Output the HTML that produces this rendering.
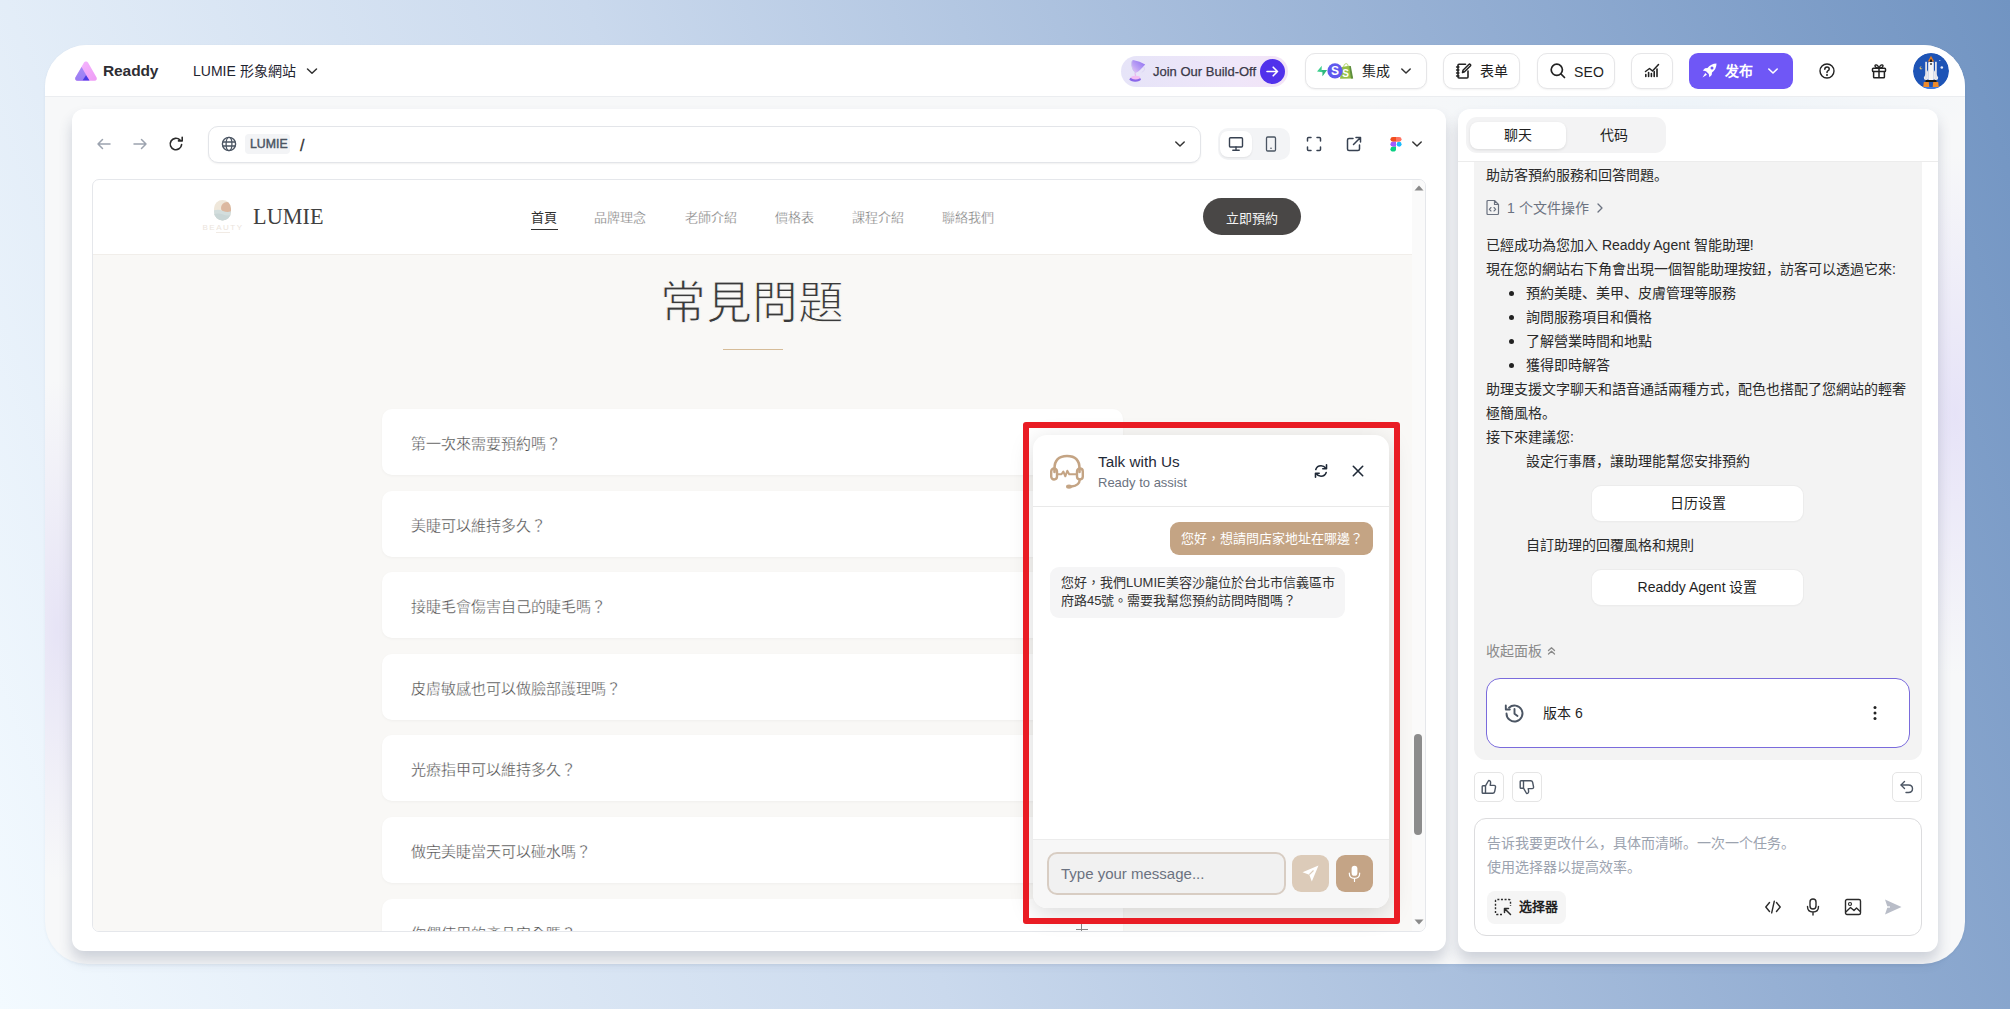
<!DOCTYPE html>
<html lang="zh-TW">
<head>
<meta charset="utf-8">
<style>
*{box-sizing:border-box;margin:0;padding:0}
html,body{width:2010px;height:1009px;overflow:hidden}
body{position:relative;font-family:"Liberation Sans",sans-serif;color:#1f2937;
background:linear-gradient(70deg,#f3faff 0%,#cad9ed 40%,#96b0d4 75%,#7194c2 100%)}
.a{position:absolute}
.win{left:45px;top:45px;width:1920px;height:919px;border-radius:42px;background:radial-gradient(ellipse 60px 250px at 12px 585px,rgba(200,190,240,.35),rgba(200,190,240,0)),radial-gradient(ellipse 90px 260px at 1910px 370px,rgba(205,195,245,.4),rgba(205,195,245,0)),radial-gradient(ellipse 320px 36px at 1640px 58px,rgba(205,228,248,.22),rgba(205,228,248,0)),#f7f8f9;overflow:hidden;box-shadow:0 1px 3px rgba(40,60,100,.06)}
.hdr{left:0;top:0;width:1920px;height:52px;background:#fff;border-bottom:1px solid #ebedf0}
.hbtn{background:#fff;border:1px solid #e6e6e8;border-radius:10px;box-shadow:0 1px 2px rgba(0,0,0,.05)}
.nav{top:208px;font:13px/20px 'Liberation Sans',sans-serif;color:#6a6a6a;-webkit-text-stroke:.3px #fff}
.faq{left:382px;width:741px;height:66px;background:#fff;border-radius:10px;box-shadow:0 1px 3px rgba(0,0,0,.04)}
.faq span{position:absolute;left:29px;top:25px;font:15px/20px 'Liberation Sans',sans-serif;color:#484848;-webkit-text-stroke:.3px #fff}
.faq.last:after{content:"";position:absolute;left:694px;top:25px;width:12px;height:12px;background:linear-gradient(#888,#888) center/12px 1.2px no-repeat,linear-gradient(#888,#888) center/1.2px 12px no-repeat}
.rp{left:1486px;font:14px/24px 'Liberation Sans',sans-serif;color:#2a2a2a;white-space:nowrap}
.dot{left:1509px;width:5px;height:5px;border-radius:50%;background:#222}
.rbtn{left:1592px;width:211px;height:35px;border-radius:9px;background:#fff;box-shadow:0 0 0 1px #ececec,0 1px 2px rgba(0,0,0,.05);font:14px/35px 'Liberation Sans',sans-serif;color:#1f1f1f;text-align:center}
.sbtn{width:30px;height:30px;border:1px solid #e5e5e5;border-radius:5px;background:#fff}
.card{background:#fff;border-radius:12px;box-shadow:0 9px 14px rgba(40,55,90,.2)}
</style>
</head>
<body>
<div class="a win">
  <div class="a hdr"></div>
</div>
<div class="a card" style="left:72px;top:109px;width:1374px;height:842px"></div>
<div class="a card" style="left:1458px;top:109px;width:480px;height:843px"></div>

<!-- HEADER -->
<svg class="a" style="left:74px;top:60px" width="24" height="22" viewBox="0 0 24 22">
  <defs>
    <linearGradient id="lgP" x1="0" y1="0" x2="1" y2="1"><stop offset="0" stop-color="#f5b8ff"/><stop offset="1" stop-color="#ee9cf5"/></linearGradient>
    <linearGradient id="lgL" x1="0" y1="0" x2="0" y2="1"><stop offset="0" stop-color="#a58bf7"/><stop offset="1" stop-color="#9a7cf3"/></linearGradient>
  </defs>
  <path d="M12 1.5 Q13 1.2 14 2.6 L22.6 17.5 Q23.6 20.5 20.5 20.8 L3.5 20.8 Q0.4 20.5 1.4 17.5 L10 2.6 Q11 1.2 12 1.5Z" fill="url(#lgP)"/>
  <path d="M7.6 7 L1.4 17.5 Q0.4 20.5 3.5 20.8 L15.5 20.8 Z" fill="url(#lgL)"/>
  <path d="M12 15.2 L15.3 20.2 L8.7 20.2 Z" fill="#4a3ae6"/>
</svg>
<div class="a" style="left:103px;top:60px;font:bold 15.5px/22px 'Liberation Sans',sans-serif;color:#2d2d33;letter-spacing:-0.1px">Readdy</div>
<div class="a" style="left:193px;top:60px;font:14px/22px 'Liberation Sans',sans-serif;color:#1f2430">LUMIE 形象網站</div>
<svg class="a" style="left:306px;top:66px" width="12" height="10" viewBox="0 0 12 10"><path d="M1.5 3 L6 7.2 L10.5 3" fill="none" stroke="#333" stroke-width="1.5" stroke-linecap="round" stroke-linejoin="round"/></svg>

<!-- Join pill -->
<div class="a" style="left:1121px;top:56px;width:167px;height:31px;border-radius:16px;background:linear-gradient(90deg,#e6e4f8,#efe6f9 70%,#f3e4f6)"></div>
<svg class="a" style="left:1127px;top:58px" width="20" height="27" viewBox="0 0 20 27">
  <defs><linearGradient id="tg" x1="1" y1="0" x2="0" y2="1"><stop offset="0" stop-color="#7f5df0"/><stop offset=".6" stop-color="#b79af4"/><stop offset="1" stop-color="#f0c8f4"/></linearGradient></defs>
  <path d="M6 2 Q4.2 3 4.6 7.5 Q5.5 12.5 8.5 15 Q11 14 13 12 Q16 9 18.2 6.5 Q13 3 6 2Z" fill="url(#tg)" opacity=".9"/>
  <path d="M6 2 Q4.2 3 4.6 7.5 Q5.5 12.5 8.5 15" fill="none" stroke="#c8c0ee" stroke-width=".8"/>
  <path d="M17 9 Q19 12 15 14.5" fill="none" stroke="#d6cff0" stroke-width=".8"/>
  <path d="M8 15 L8.6 18" stroke="#e6b8f0" stroke-width="1.2"/>
  <ellipse cx="8.2" cy="21.3" rx="5.6" ry="2.4" fill="#8a66ea"/>
  <ellipse cx="8.6" cy="19.6" rx="4.6" ry="1.8" fill="#f2bdf2"/>
</svg>
<div class="a" style="left:1153px;top:62.5px;font:13px/18px 'Liberation Sans',sans-serif;color:#3a3848;-webkit-text-stroke:.25px #3a3848">Join Our Build-Off</div>
<div class="a" style="left:1260px;top:59px;width:25px;height:25px;border-radius:50%;background:#5131eb"></div>
<svg class="a" style="left:1264px;top:63px" width="17" height="17" viewBox="0 0 17 17"><path d="M3 8.5 H13.5 M9.2 4.2 L13.5 8.5 L9.2 12.8" fill="none" stroke="#fff" stroke-width="1.6" stroke-linecap="round" stroke-linejoin="round"/></svg>

<!-- 集成 -->
<div class="a hbtn" style="left:1305px;top:53px;width:122px;height:36px"></div>
<svg class="a" style="left:1315px;top:61px" width="40" height="20" viewBox="0 0 40 20">
  <path d="M2 10.5 L6.8 4.8 L6.6 9 L12 9 L7.5 15.3 L7.6 11.2 Z" fill="#3ecf8e"/>
  <path d="M6.6 9 L12 9 L7.5 15.3 L7.6 11.2Z" fill="#2aa872" opacity=".6"/>
  <path d="M26.5 6 L34.5 4.8 L37.8 17.5 L25 17.8 Z" fill="#95bf47"/>
  <path d="M34.2 4.9 L35.8 5 L38.2 17.4 L36 17.6 Z" fill="#5e8e3e"/>
  <path d="M28.5 6 Q29 2.6 31.2 2.6 Q33 2.7 33.2 5.2" fill="none" stroke="#b6d66e" stroke-width="1"/>
  <text x="30.5" y="15.5" text-anchor="middle" font-family="Liberation Sans" font-weight="bold" font-size="10" fill="#fff">S</text>
  <circle cx="20" cy="9.9" r="7.6" fill="#5e58ee"/>
  <text x="20" y="14.2" text-anchor="middle" font-family="Liberation Sans" font-weight="bold" font-size="12" fill="#fff">S</text>
</svg>
<div class="a" style="left:1362px;top:60px;font:14px/22px 'Liberation Sans',sans-serif;color:#1f1f1f">集成</div>
<svg class="a" style="left:1400px;top:66px" width="12" height="10" viewBox="0 0 12 10"><path d="M1.8 3 L6 7 L10.2 3" fill="none" stroke="#333" stroke-width="1.5" stroke-linecap="round" stroke-linejoin="round"/></svg>

<!-- 表单 -->
<div class="a hbtn" style="left:1443px;top:53px;width:77px;height:36px"></div>
<svg class="a" style="left:1455px;top:62px" width="17" height="18" viewBox="0 0 17 18">
  <path d="M10.5 2.2 H4 Q3 2.2 3 3.2 V15 Q3 16 4 16 H12 Q13 16 13 15 V9" fill="none" stroke="#222" stroke-width="1.6" stroke-linecap="round"/>
  <path d="M7.5 10.5 L8 8.3 L13.8 2.5 Q14.6 1.8 15.3 2.5 Q16 3.2 15.3 4 L9.5 9.8 Z" fill="none" stroke="#222" stroke-width="1.5" stroke-linejoin="round"/>
  <path d="M1.5 5 H4 M1.5 8 H4 M1.5 11 H4 M1.5 14 H4" stroke="#222" stroke-width="1.3" stroke-linecap="round"/>
</svg>
<div class="a" style="left:1480px;top:60px;font:14px/22px 'Liberation Sans',sans-serif;color:#1f1f1f">表单</div>

<!-- SEO -->
<div class="a hbtn" style="left:1537px;top:53px;width:78px;height:36px"></div>
<svg class="a" style="left:1549px;top:62px" width="18" height="18" viewBox="0 0 18 18"><circle cx="7.8" cy="7.8" r="5.6" fill="none" stroke="#222" stroke-width="1.7"/><path d="M12 12 L15.5 15.5" stroke="#222" stroke-width="1.7" stroke-linecap="round"/></svg>
<div class="a" style="left:1574px;top:60.5px;font:14px/22px 'Liberation Sans',sans-serif;color:#1f1f1f;letter-spacing:.1px">SEO</div>

<!-- chart -->
<div class="a hbtn" style="left:1631px;top:53px;width:42px;height:36px"></div>
<svg class="a" style="left:1643px;top:61px" width="18" height="18" viewBox="0 0 18 18">
  <path d="M2.5 10.5 L6.5 7.5 L9.5 10 L15.5 3.5" fill="none" stroke="#222" stroke-width="1.5" stroke-linecap="round" stroke-linejoin="round"/>
  <path d="M2.8 15.5 V13.5 M5.6 15.5 V11.5 M8.4 15.5 V12.5 M11.2 15.5 V10.5 M14 15.5 V8" stroke="#222" stroke-width="1.6" stroke-linecap="round"/>
</svg>

<!-- 发布 -->
<div class="a" style="left:1689px;top:53px;width:104px;height:36px;border-radius:9px;background:#6f57f6"></div>
<svg class="a" style="left:1701px;top:62px" width="17" height="17" viewBox="0 0 17 17">
  <path d="M15.5 1.5 Q10 1.5 6.5 6 L4 6.3 L1.8 8.6 L5 9.2 L7.8 12 L8.4 15.2 L10.7 13 L11 10.5 Q15.5 7 15.5 1.5Z" fill="#fff"/>
  <circle cx="11" cy="6" r="1.5" fill="#6f57f6"/>
  <path d="M4.3 11 L1.5 15.5 L6 12.7 Z" fill="#fff"/>
</svg>
<div class="a" style="left:1725px;top:60px;font:bold 14px/22px 'Liberation Sans',sans-serif;color:#fff">发布</div>
<svg class="a" style="left:1767px;top:66px" width="12" height="10" viewBox="0 0 12 10"><path d="M1.8 3 L6 7 L10.2 3" fill="none" stroke="#fff" stroke-width="1.6" stroke-linecap="round" stroke-linejoin="round"/></svg>

<!-- help, gift, avatar -->
<svg class="a" style="left:1818px;top:62px" width="18" height="18" viewBox="0 0 18 18"><circle cx="9" cy="9" r="7" fill="none" stroke="#222" stroke-width="1.4"/><path d="M6.8 7.2 Q6.8 4.9 9 4.9 Q11.2 4.9 11.2 6.9 Q11.2 8.2 9.8 8.9 Q9 9.3 9 10.6" fill="none" stroke="#222" stroke-width="1.5" stroke-linecap="round"/><circle cx="9" cy="12.9" r="1" fill="#222"/></svg>
<svg class="a" style="left:1870px;top:62px" width="18" height="18" viewBox="0 0 18 18">
  <rect x="2.5" y="6.2" width="13" height="3.3" rx=".8" fill="none" stroke="#222" stroke-width="1.5"/>
  <path d="M3.6 9.5 V15 Q3.6 15.8 4.4 15.8 H13.6 Q14.4 15.8 14.4 15 V9.5 M9 6.2 V15.8" fill="none" stroke="#222" stroke-width="1.5"/>
  <path d="M9 6.2 Q7.8 2.5 5.8 2.9 Q4.3 3.4 5.5 5 Q6.5 6.2 9 6.2 Q11.5 6.2 12.5 5 Q13.7 3.4 12.2 2.9 Q10.2 2.5 9 6.2" fill="none" stroke="#222" stroke-width="1.4"/>
</svg>
<svg class="a" style="left:1913px;top:53px" width="36" height="36" viewBox="0 0 36 36">
  <defs><clipPath id="avc"><circle cx="18" cy="18" r="18"/></clipPath></defs>
  <g clip-path="url(#avc)">
  <circle cx="18" cy="18" r="18" fill="#1e54b6"/>
  <rect x="0" y="34" width="36" height="3" fill="#3f7be0"/>
  <path d="M18 2.8 L21.2 8.5 H14.8 Z" fill="#e07b24"/>
  <rect x="17" y="6.5" width="2" height="2.5" fill="#222"/>
  <rect x="15.2" y="9" width="5.6" height="18" rx="1" fill="#f4f4f6"/>
  <rect x="17.3" y="10" width="1.4" height="2" fill="#333"/>
  <path d="M15.3 16.5 L10.8 24.5 L11.2 26.5 H15.3Z M20.7 16.5 L25.2 24.5 L24.8 26.5 H20.7Z" fill="#e9e9ee"/>
  <rect x="12.2" y="8.8" width="1.8" height="18.5" fill="#e2e2e8"/><rect x="22" y="8.8" width="1.8" height="18.5" fill="#e2e2e8"/>
  <rect x="12.5" y="27" width="11" height="2" fill="#1a1a1a"/>
  <path d="M10.8 29 H15.8 L16.3 34 H10.2Z M20.2 29 H25.2 L25.8 34 H19.7Z" fill="#ee8a2a"/>
  <circle cx="8" cy="15" r="1.4" fill="#e9c86a"/><circle cx="8.7" cy="14.5" r="1.1" fill="#1e54b6"/>
  <circle cx="28.8" cy="14.5" r="1.3" fill="#e8eefc"/><circle cx="26.8" cy="7.5" r=".6" fill="#dfe8fa"/>
  </g>
</svg>


<!-- BROWSER TOOLBAR -->
<svg class="a" style="left:95px;top:135px" width="18" height="18" viewBox="0 0 18 18"><path d="M15 9 H3 M7.5 4.5 L3 9 L7.5 13.5" fill="none" stroke="#9ca3af" stroke-width="1.5" stroke-linecap="round" stroke-linejoin="round"/></svg>
<svg class="a" style="left:131px;top:135px" width="18" height="18" viewBox="0 0 18 18"><path d="M3 9 H15 M10.5 4.5 L15 9 L10.5 13.5" fill="none" stroke="#9ca3af" stroke-width="1.5" stroke-linecap="round" stroke-linejoin="round"/></svg>
<svg class="a" style="left:167px;top:135px" width="18" height="18" viewBox="0 0 18 18"><path d="M14.6 9.6 A5.7 5.7 0 1 1 12.9 4.9" fill="none" stroke="#2b2b2b" stroke-width="1.6" stroke-linecap="round"/><path d="M15.2 2.2 V5.9 H11.5" fill="none" stroke="#2b2b2b" stroke-width="1.6" stroke-linecap="round" stroke-linejoin="round"/></svg>
<div class="a" style="left:208px;top:126px;width:993px;height:37px;border:1px solid #e3e5e9;border-radius:10px;background:#fff;box-shadow:0 1px 2px rgba(0,0,0,.06)"></div>
<svg class="a" style="left:220px;top:135px" width="18" height="18" viewBox="0 0 18 18"><circle cx="9" cy="9" r="6.6" fill="none" stroke="#4b5563" stroke-width="1.4"/><ellipse cx="9" cy="9" rx="2.9" ry="6.6" fill="none" stroke="#4b5563" stroke-width="1.3"/><path d="M2.6 7 H15.4 M2.6 11 H15.4" stroke="#4b5563" stroke-width="1.3"/></svg>
<div class="a" style="left:245px;top:134px;width:45px;height:20px;border-radius:4px;background:#f3f4f6"></div>
<div class="a" style="left:250px;top:135px;font:12.3px/18px 'Liberation Sans',sans-serif;color:#4b5563;-webkit-text-stroke:.45px #4b5563">LUMIE</div>
<div class="a" style="left:300px;top:136px;font:16px/20px 'Liberation Sans',sans-serif;color:#333;-webkit-text-stroke:.3px #333">/</div>
<svg class="a" style="left:1174px;top:139px" width="12" height="10" viewBox="0 0 12 10"><path d="M1.8 3 L6 7 L10.2 3" fill="none" stroke="#333" stroke-width="1.5" stroke-linecap="round" stroke-linejoin="round"/></svg>
<div class="a" style="left:1218px;top:128px;width:72px;height:32px;border-radius:10px;background:#f3f4f6"></div>
<div class="a" style="left:1220px;top:131px;width:32px;height:26px;border-radius:8px;background:#fff;box-shadow:0 1px 2px rgba(0,0,0,.08)"></div>
<svg class="a" style="left:1228px;top:136px" width="16" height="16" viewBox="0 0 16 16"><rect x="1.5" y="1.8" width="13" height="9.2" rx="1" fill="none" stroke="#374151" stroke-width="1.4"/><path d="M8 11 V14 M4.8 14.3 H11.2" stroke="#374151" stroke-width="1.4" stroke-linecap="round"/></svg>
<svg class="a" style="left:1263px;top:136px" width="16" height="16" viewBox="0 0 16 16"><rect x="3.5" y="1" width="9" height="14" rx="1.2" fill="none" stroke="#4b5563" stroke-width="1.3"/><circle cx="8" cy="12.3" r=".8" fill="#4b5563"/></svg>
<svg class="a" style="left:1306px;top:136px" width="16" height="16" viewBox="0 0 16 16"><path d="M1.5 5 V2.5 Q1.5 1.5 2.5 1.5 H5 M11 1.5 H13.5 Q14.5 1.5 14.5 2.5 V5 M14.5 11 V13.5 Q14.5 14.5 13.5 14.5 H11 M5 14.5 H2.5 Q1.5 14.5 1.5 13.5 V11" fill="none" stroke="#374151" stroke-width="1.5" stroke-linecap="round"/></svg>
<svg class="a" style="left:1346px;top:136px" width="16" height="16" viewBox="0 0 16 16"><path d="M7 2.5 H3 Q1.5 2.5 1.5 4 V13 Q1.5 14.5 3 14.5 H12 Q13.5 14.5 13.5 13 V9" fill="none" stroke="#374151" stroke-width="1.5" stroke-linecap="round"/><path d="M7.5 8.5 L14.5 1.5 M10 1.5 H14.5 V6" fill="none" stroke="#374151" stroke-width="1.5" stroke-linecap="round" stroke-linejoin="round"/></svg>
<svg class="a" style="left:1390px;top:136px" width="12" height="16.5" viewBox="1.6 0.6 10.8 13.6">
  <path d="M2 3 Q2 0.8 4.2 0.8 H7 V5.2 H4.2 Q2 5.2 2 3Z" fill="#f24e1e"/>
  <path d="M7 0.8 H9.8 Q12 0.8 12 3 Q12 5.2 9.8 5.2 H7Z" fill="#ff7262"/>
  <path d="M2 7.4 Q2 5.2 4.2 5.2 H7 V9.6 H4.2 Q2 9.6 2 7.4Z" fill="#a259ff"/>
  <circle cx="9.8" cy="7.4" r="2.2" fill="#1abcfe"/>
  <path d="M2 11.8 Q2 9.6 4.2 9.6 H7 V11.8 Q7 14 4.5 14 Q2 14 2 11.8Z" fill="#0acf83"/>
</svg>
<svg class="a" style="left:1411px;top:139px" width="12" height="10" viewBox="0 0 12 10"><path d="M1.8 3 L6 7 L10.2 3" fill="none" stroke="#333" stroke-width="1.5" stroke-linecap="round" stroke-linejoin="round"/></svg>

<!-- PREVIEW FRAME -->
<div class="a" style="left:92px;top:179px;width:1334px;height:753px;border:1px solid #e5e7eb;border-radius:7px;overflow:hidden;background:#fff">
  <div class="a" style="left:0;top:74px;width:1319px;height:680px;background:#f9f8f6;border-top:1px solid #f1eeea"></div>
  <div class="a" style="left:1319px;top:0;width:14px;height:751px;background:#fafafa"></div>
  <svg class="a" style="left:1321px;top:5px" width="10" height="6" viewBox="0 0 10 6"><path d="M0.5 5.5 L5 0.5 L9.5 5.5Z" fill="#8a8a8a"/></svg>
  <svg class="a" style="left:1321px;top:739px" width="10" height="6" viewBox="0 0 10 6"><path d="M0.5 0.5 L5 5.5 L9.5 0.5Z" fill="#8a8a8a"/></svg>
  <div class="a" style="left:1321px;top:554px;width:8px;height:101px;border-radius:4px;background:#8c8c8c"></div>
</div>


<!-- LUMIE SITE -->
<svg class="a" style="left:202px;top:197px" width="42" height="38" viewBox="0 0 42 38">
  <defs><clipPath id="egg"><rect x="12" y="3" width="17" height="20.5" rx="8.5"/></clipPath></defs>
  <g clip-path="url(#egg)">
    <rect x="12" y="3" width="17" height="21" fill="#efe7da"/>
    <circle cx="25" cy="11" r="6" fill="#dcb8a0"/>
    <path d="M10 14 Q16 11.5 21 14 Q26 16 31 13.5 V25 H10Z" fill="#d3dedd"/>
    <path d="M10 17.5 Q16 15.5 21 17.5 Q26 19.5 31 17 V25 H10Z" fill="#c9d6d6"/>
  </g>
  <text x="21" y="32.5" text-anchor="middle" font-family="Liberation Sans" font-size="8" letter-spacing="1.5" fill="#ebe4dc">BEAUTY</text>
  <rect x="14" y="35" width="14" height=".8" fill="#eee7df"/>
</svg>
<div class="a" style="left:253px;top:204px;font:22.2px/26px 'Liberation Serif',serif;color:#404040;letter-spacing:.1px">LUMIE</div>
<div class="a nav" style="left:531px;color:#2f2f2f;-webkit-text-stroke:0">首頁</div>
<div class="a" style="left:531px;top:228.5px;width:27px;height:1.6px;background:#333"></div>
<div class="a nav" style="left:594px">品牌理念</div>
<div class="a nav" style="left:685px">老師介紹</div>
<div class="a nav" style="left:775px">價格表</div>
<div class="a nav" style="left:852px">課程介紹</div>
<div class="a nav" style="left:942px">聯絡我們</div>
<div class="a" style="left:1203px;top:198px;width:98px;height:37px;border-radius:19px;background:#494746;color:#f4f4f4;font:13px/41px 'Liberation Sans',sans-serif;text-align:center">立即預約</div>

<div class="a" style="left:552px;top:273.5px;width:400px;text-align:center;font:300 45.8px/60px 'Liberation Sans',sans-serif;color:#3a3a3a;-webkit-text-stroke:1px #f9f8f6">常見問題</div>
<div class="a" style="left:723px;top:349px;width:60px;height:1px;background:#d6bc98"></div>

<div class="a faq" style="top:409px"><span>第一次來需要預約嗎？</span></div>
<div class="a faq" style="top:491px"><span>美睫可以維持多久？</span></div>
<div class="a faq" style="top:572px"><span>接睫毛會傷害自己的睫毛嗎？</span></div>
<div class="a faq" style="top:654px"><span>皮膚敏感也可以做臉部護理嗎？</span></div>
<div class="a faq" style="top:735px"><span>光療指甲可以維持多久？</span></div>
<div class="a faq" style="top:817px"><span>做完美睫當天可以碰水嗎？</span></div>
<div class="a" style="left:93px;top:899px;width:1318px;height:32px;overflow:hidden">
  <div class="a faq last" style="left:289px;top:0"><span>你們使用的產品安全嗎？</span></div>
</div>


<!-- CHAT WIDGET -->
<div class="a" style="left:1033px;top:435px;width:356px;height:473px;border-radius:14px;background:#fff;box-shadow:0 6px 24px rgba(0,0,0,.15);overflow:hidden">
  <div class="a" style="left:0;top:0;width:356px;height:72px;border-bottom:1px solid #e9e9e9"></div>
  <div class="a" style="left:0;top:404px;width:356px;height:69px;background:#f7f7f7;border-top:1px solid #ececec"></div>
</div>
<svg class="a" style="left:1048px;top:452px" width="38" height="38" viewBox="0 0 38 38">
  <path d="M6.5 20 V16.5 Q6.5 4 19 4 Q31.5 4 31.5 16.5 V20" fill="none" stroke="#c4a484" stroke-width="2.6" stroke-linecap="round"/>
  <rect x="3.2" y="16.5" width="5.8" height="11" rx="2.9" fill="none" stroke="#c4a484" stroke-width="2.4"/>
  <rect x="29" y="16.5" width="5.8" height="11" rx="2.9" fill="none" stroke="#c4a484" stroke-width="2.4"/>
  <path d="M9 22.2 H13.5 L15.3 19.5 L17.3 24.3 L19.3 18.8 L21.2 22.2 H29" fill="none" stroke="#c4a484" stroke-width="2" stroke-linejoin="round"/>
  <path d="M31.8 27.5 Q31.5 33.5 23.5 34.5" fill="none" stroke="#c4a484" stroke-width="2.4" stroke-linecap="round"/>
  <ellipse cx="21" cy="34.6" rx="3" ry="2.2" fill="#c4a484"/>
</svg>
<div class="a" style="left:1098px;top:453px;font:15.3px/18px 'Liberation Sans',sans-serif;color:#1f2937">Talk with Us</div>
<div class="a" style="left:1098px;top:475px;font:13px/16px 'Liberation Sans',sans-serif;color:#6b7280">Ready to assist</div>
<svg class="a" style="left:1313px;top:463px" width="16" height="16" viewBox="0 0 16 16">
  <path d="M2.8 6.5 Q4 2.8 8 2.8 Q11 2.8 12.8 5.2" fill="none" stroke="#1f2937" stroke-width="1.6" stroke-linecap="round"/>
  <path d="M13.5 1.8 V5.8 H9.8" fill="none" stroke="#1f2937" stroke-width="1.6" stroke-linecap="round" stroke-linejoin="round"/>
  <path d="M13.2 9.5 Q12 13.2 8 13.2 Q5 13.2 3.2 10.8" fill="none" stroke="#1f2937" stroke-width="1.6" stroke-linecap="round"/>
  <path d="M2.5 14.2 V10.2 H6.2" fill="none" stroke="#1f2937" stroke-width="1.6" stroke-linecap="round" stroke-linejoin="round"/>
</svg>
<svg class="a" style="left:1351px;top:464px" width="14" height="14" viewBox="0 0 14 14"><path d="M2.3 2.3 L11.7 11.7 M11.7 2.3 L2.3 11.7" stroke="#1f2937" stroke-width="1.6" stroke-linecap="round"/></svg>

<div class="a" style="left:1170px;top:522px;width:203px;height:33px;border-radius:9px;background:#c4a484;color:#fff;font:13px/33px 'Liberation Sans',sans-serif;text-align:center">您好，想請問店家地址在哪邊？</div>
<div class="a" style="left:1050px;top:567px;width:295px;height:51px;border-radius:9px;background:#f5f5f6;color:#333;font:13px/18px 'Liberation Sans',sans-serif;padding:7px 0 0 11px">您好，我們LUMIE美容沙龍位於台北市信義區市<br>府路45號。需要我幫您預約訪問時間嗎？</div>

<div class="a" style="left:1047px;top:852px;width:239px;height:43px;border:2px solid #d8cdc3;border-radius:10px;background:#f1f1f1"></div>
<div class="a" style="left:1061px;top:865px;font:15px/18px 'Liberation Sans',sans-serif;color:#6b7280">Type your message...</div>
<div class="a" style="left:1292px;top:855px;width:37px;height:37px;border-radius:9px;background:#dccbb9"></div>
<svg class="a" style="left:1300px;top:863px" width="21" height="21" viewBox="0 0 21 21"><path d="M18.5 2.5 L2.5 9.2 L9.3 11.7 L11.8 18.5 Z" fill="#fff"/><path d="M9.3 11.7 L13.5 7.5" stroke="#dccbb9" stroke-width="1.1"/></svg>
<div class="a" style="left:1336px;top:855px;width:37px;height:37px;border-radius:9px;background:#c4a486"></div>
<svg class="a" style="left:1344px;top:863px" width="21" height="21" viewBox="0 0 21 21"><rect x="7.6" y="2.8" width="5.8" height="10" rx="2.9" fill="#fff"/><path d="M5.3 10.2 Q5.3 15.3 10.5 15.3 Q15.7 15.3 15.7 10.2 M10.5 15.3 V18.5" fill="none" stroke="#fff" stroke-width="1.2" stroke-linecap="round"/></svg>

<!-- red annotation frame -->
<div class="a" style="left:1023px;top:422px;width:377px;height:502px;border:6px solid #e91c24;border-radius:3px"></div>


<!-- RIGHT PANEL -->
<div class="a" style="left:1458px;top:161px;width:480px;height:1px;background:#ececec"></div>
<div class="a" style="left:1466px;top:117px;width:200px;height:36px;border-radius:11px;background:#f3f3f4"></div>
<div class="a" style="left:1470px;top:122px;width:96px;height:27px;border-radius:8px;background:#fff;box-shadow:0 1px 3px rgba(0,0,0,.1)"></div>
<div class="a" style="left:1470px;top:122px;width:96px;font:14px/27px 'Liberation Sans',sans-serif;color:#1f1f1f;text-align:center">聊天</div>
<div class="a" style="left:1566px;top:122px;width:96px;font:14px/27px 'Liberation Sans',sans-serif;color:#1f1f1f;text-align:center">代码</div>

<div class="a" style="left:1474px;top:162px;width:448px;height:598px;background:#f3f3f3;border-radius:0 0 12px 12px"></div>
<div lang="zh-CN" class="a rp" style="top:163px">助訪客預約服務和回答問題。</div>
<svg class="a" style="left:1485px;top:199px" width="16" height="17" viewBox="0 0 16 17"><path d="M3 1.5 H9.5 L13.5 5.5 V14.5 Q13.5 15.5 12.5 15.5 H3 Q2 15.5 2 14.5 V2.5 Q2 1.5 3 1.5Z M9.5 1.5 V5.5 H13.5" fill="none" stroke="#6b7280" stroke-width="1.2" stroke-linejoin="round"/><path d="M6 8.5 L4.3 10.3 L6 12 M9 8.5 L10.7 10.3 L9 12" fill="none" stroke="#6b7280" stroke-width="1.1" stroke-linecap="round" stroke-linejoin="round"/></svg>
<div lang="zh-CN" class="a rp" style="top:196px;left:1507px;color:#6b7280">1 个文件操作</div>
<svg class="a" style="left:1595px;top:202px" width="10" height="12" viewBox="0 0 10 12"><path d="M3 2 L7 6 L3 10" fill="none" stroke="#6b7280" stroke-width="1.3" stroke-linecap="round" stroke-linejoin="round"/></svg>
<div lang="zh-CN" class="a rp" style="top:233px">已經成功為您加入 Readdy Agent 智能助理!</div>
<div lang="zh-CN" class="a rp" style="top:257px">現在您的網站右下角會出現一個智能助理按鈕，訪客可以透過它來:</div>
<div lang="zh-CN" class="a rp" style="top:281px;left:1526px">預約美睫、美甲、皮膚管理等服務</div>
<div lang="zh-CN" class="a rp" style="top:305px;left:1526px">詢問服務項目和價格</div>
<div lang="zh-CN" class="a rp" style="top:329px;left:1526px">了解營業時間和地點</div>
<div lang="zh-CN" class="a rp" style="top:353px;left:1526px">獲得即時解答</div>
<div class="a dot" style="top:291px"></div><div class="a dot" style="top:315px"></div><div class="a dot" style="top:339px"></div><div class="a dot" style="top:363px"></div>
<div lang="zh-CN" class="a rp" style="top:377px">助理支援文字聊天和語音通話兩種方式，配色也搭配了您網站的輕奢</div>
<div lang="zh-CN" class="a rp" style="top:401px">極簡風格。</div>
<div lang="zh-CN" class="a rp" style="top:425px">接下來建議您:</div>
<div lang="zh-CN" class="a rp" style="top:449px;left:1526px">設定行事曆，讓助理能幫您安排預約</div>
<div class="a rbtn" style="top:486px">日历设置</div>
<div lang="zh-CN" class="a rp" style="top:533px;left:1526px">自訂助理的回覆風格和規則</div>
<div class="a rbtn" style="top:570px">Readdy Agent 设置</div>
<div lang="zh-CN" class="a rp" style="top:639px;color:#8a8a8a">收起面板</div>
<svg class="a" style="left:1546px;top:645px" width="11" height="12" viewBox="0 0 11 12"><path d="M2.5 5.5 L5.5 2.8 L8.5 5.5 M2.5 9 L5.5 6.3 L8.5 9" fill="none" stroke="#8a8a8a" stroke-width="1.3" stroke-linecap="round" stroke-linejoin="round"/></svg>

<div class="a" style="left:1486px;top:678px;width:424px;height:70px;border:1.5px solid #7a6bdc;border-radius:14px;background:#fff"></div>
<svg class="a" style="left:1503px;top:702px" width="23" height="23" viewBox="0 0 23 23"><path d="M3.5 11.5 A8 8 0 1 0 6 5.7" fill="none" stroke="#4b5563" stroke-width="1.9" stroke-linecap="round"/><path d="M2.8 3.5 V7.5 H6.8" fill="none" stroke="#4b5563" stroke-width="1.9" stroke-linecap="round" stroke-linejoin="round"/><path d="M11.5 7 V11.8 L14.5 14" fill="none" stroke="#4b5563" stroke-width="1.9" stroke-linecap="round" stroke-linejoin="round"/></svg>
<div class="a" style="left:1543px;top:702px;font:14px/22px 'Liberation Sans',sans-serif;color:#1f1f1f">版本 6</div>
<svg class="a" style="left:1869px;top:703px" width="12" height="20" viewBox="0 0 12 20"><circle cx="6" cy="4.5" r="1.5" fill="#222"/><circle cx="6" cy="10" r="1.5" fill="#222"/><circle cx="6" cy="15.5" r="1.5" fill="#222"/></svg>

<div class="a sbtn" style="left:1474px;top:772px"></div>
<div class="a sbtn" style="left:1512px;top:772px"></div>
<div class="a sbtn" style="left:1892px;top:772px"></div>
<svg class="a" style="left:1480px;top:778px" width="18" height="18" viewBox="0 0 18 18"><path d="M5.5 7.8 V15.2 H3 Q2.2 15.2 2.2 14.4 V8.6 Q2.2 7.8 3 7.8 Z M5.5 7.8 L8.6 2.5 Q10.8 2.4 10.6 5 L10.2 7.4 H14 Q15.8 7.5 15.5 9.3 L14.6 13.8 Q14.2 15.2 12.8 15.2 H5.5" fill="none" stroke="#4b5563" stroke-width="1.4" stroke-linejoin="round"/></svg>
<svg class="a" style="left:1518px;top:778px" width="18" height="18" viewBox="0 0 18 18"><path d="M5.5 10.2 V2.8 H3 Q2.2 2.8 2.2 3.6 V9.4 Q2.2 10.2 3 10.2 Z M5.5 10.2 L8.6 15.5 Q10.8 15.6 10.6 13 L10.2 10.6 H14 Q15.8 10.5 15.5 8.7 L14.6 4.2 Q14.2 2.8 12.8 2.8 H5.5" fill="none" stroke="#4b5563" stroke-width="1.4" stroke-linejoin="round"/></svg>
<svg class="a" style="left:1898px;top:778px" width="18" height="18" viewBox="0 0 18 18"><path d="M6.5 3.5 L3 7 L6.5 10.5" fill="none" stroke="#4b5563" stroke-width="1.4" stroke-linecap="round" stroke-linejoin="round"/><path d="M3.3 7 H10.5 Q14.5 7 14.5 10.8 Q14.5 14.5 10.5 14.5 H8" fill="none" stroke="#4b5563" stroke-width="1.4" stroke-linecap="round"/></svg>

<div class="a" style="left:1474px;top:818px;width:448px;height:118px;border:1px solid #dcdcde;border-radius:12px;background:#fff"></div>
<div lang="zh-CN" class="a" style="left:1487px;top:831px;font:14px/24px 'Liberation Sans',sans-serif;color:#9ca3af">告诉我要更改什么，具体而清晰。一次一个任务。<br>使用选择器以提高效率。</div>
<div class="a" style="left:1487px;top:891px;width:79px;height:33px;border-radius:8px;background:#f5f5f5"></div>
<svg class="a" style="left:1493px;top:897px" width="20" height="20" viewBox="0 0 20 20"><path d="M9 17.5 H4 Q2.5 17.5 2.5 16 V4 Q2.5 2.5 4 2.5 H16 Q17.5 2.5 17.5 4 V9" fill="none" stroke="#2b2b2b" stroke-width="1.4" stroke-dasharray="2 1.6"/><path d="M11.5 11.5 L17.5 17.5 M11.5 11.5 V15.5 M11.5 11.5 H15.5" fill="none" stroke="#2b2b2b" stroke-width="1.5" stroke-linecap="round"/></svg>
<div class="a" style="left:1519px;top:896px;font:bold 13px/22px 'Liberation Sans',sans-serif;color:#1f1f1f">选择器</div>
<svg class="a" style="left:1764px;top:898px" width="18" height="18" viewBox="0 0 18 18"><path d="M5.5 4.5 L1.8 9 L5.5 13.5 M12.5 4.5 L16.2 9 L12.5 13.5 M10.3 3.2 L7.7 14.8" fill="none" stroke="#2b2b2b" stroke-width="1.4" stroke-linecap="round" stroke-linejoin="round"/></svg>
<svg class="a" style="left:1804px;top:897px" width="18" height="20" viewBox="0 0 18 20"><rect x="6" y="2" width="6" height="10" rx="3" fill="none" stroke="#2b2b2b" stroke-width="1.4"/><path d="M3.5 9.5 Q3.5 15 9 15 Q14.5 15 14.5 9.5 M9 15 V18" fill="none" stroke="#2b2b2b" stroke-width="1.4" stroke-linecap="round"/></svg>
<svg class="a" style="left:1844px;top:898px" width="18" height="18" viewBox="0 0 18 18"><rect x="1.5" y="1.5" width="15" height="15" rx="1.5" fill="none" stroke="#2b2b2b" stroke-width="1.4"/><circle cx="6" cy="6" r="1.5" fill="none" stroke="#2b2b2b" stroke-width="1.2"/><path d="M1.8 14 L6.5 9.5 L10 12.5 L12.5 10 L16.2 13.5" fill="none" stroke="#2b2b2b" stroke-width="1.4" stroke-linejoin="round"/></svg>
<svg class="a" style="left:1884px;top:898px" width="18" height="18" viewBox="0 0 18 18"><path d="M1 1.5 L17.5 9 L1 16.5 L3.5 9 Z" fill="#b9bdc8"/><path d="M1 9 H6" stroke="#fff" stroke-width="1.3"/></svg>

</body>
</html>
